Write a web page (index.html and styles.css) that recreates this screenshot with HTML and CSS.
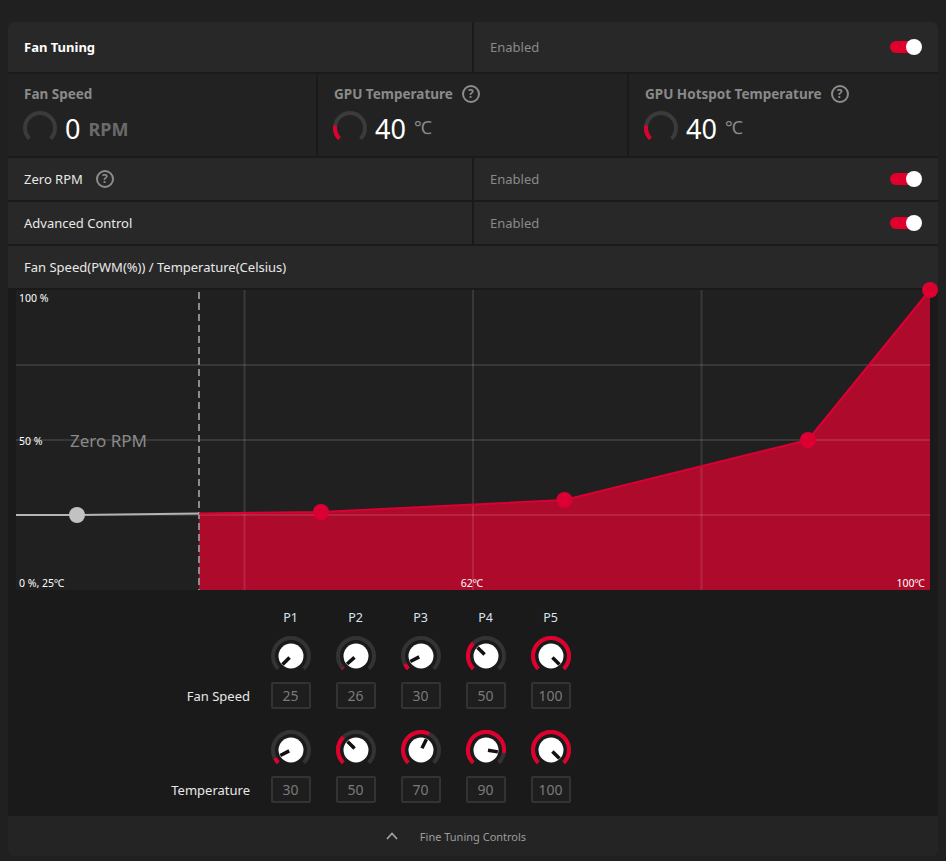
FILE: index.html
```html
<!DOCTYPE html>
<html>
<head>
<meta charset="utf-8">
<link rel="stylesheet" href="styles.css">
</head>
<body>
<div class="panel">
  <div class="row row-head">
    <div class="cell"><span class="title">Fan Tuning</span></div>
    <div class="cell cell-right"><span class="enabled">Enabled</span><span class="toggle"></span></div>
  </div>

  <div class="stats">
    <div class="stat">
      <div class="stat-title">Fan Speed</div>
      <div class="stat-value">
        <svg class="gauge" viewBox="0 0 40 40" width="40" height="40">
          <path class="g-track" d="M9.39 30.61 A15 15 0 1 1 30.61 30.61"/>
        </svg>
        <span class="num">0</span><span class="unit unit-bold">RPM</span>
      </div>
    </div>
    <div class="stat">
      <div class="stat-title">GPU Temperature <span class="help">?</span></div>
      <div class="stat-value">
        <svg class="gauge" viewBox="0 0 40 40" width="40" height="40">
          <path class="g-track" d="M9.39 30.61 A15 15 0 1 1 30.61 30.61"/>
          <path class="g-val" d="M9.39 30.61 A15 15 0 0 1 5.18 17.65"/>
        </svg>
        <span class="num">40</span><span class="unit">℃</span>
      </div>
    </div>
    <div class="stat">
      <div class="stat-title">GPU Hotspot Temperature <span class="help">?</span></div>
      <div class="stat-value">
        <svg class="gauge" viewBox="0 0 40 40" width="40" height="40">
          <path class="g-track" d="M9.39 30.61 A15 15 0 1 1 30.61 30.61"/>
          <path class="g-val" d="M9.39 30.61 A15 15 0 0 1 5.18 17.65"/>
        </svg>
        <span class="num">40</span><span class="unit">℃</span>
      </div>
    </div>
  </div>

  <div class="row">
    <div class="cell"><span class="label">Zero RPM</span><span class="help help-row">?</span></div>
    <div class="cell cell-right"><span class="enabled">Enabled</span><span class="toggle"></span></div>
  </div>

  <div class="row">
    <div class="cell"><span class="label">Advanced Control</span></div>
    <div class="cell cell-right"><span class="enabled">Enabled</span><span class="toggle"></span></div>
  </div>

  <div class="row row-full">
    <div class="cell"><span class="label">Fan Speed(PWM(%)) / Temperature(Celsius)</span></div>
  </div>

  <div class="chart-wrap">
    <svg class="chart" viewBox="0 0 914 300" width="914" height="300">
      <rect x="0" y="0" width="914" height="300" class="c-bg"/>
      <polygon class="c-fill" points="183,223.5 305,222 548.4,210 792,150 914,0 914,300 183,300"/>
      <g class="c-grid">
        <line x1="0" y1="75" x2="914" y2="75"/>
        <line x1="0" y1="150" x2="914" y2="150"/>
        <line x1="0" y1="225" x2="914" y2="225"/>
        <line x1="228.5" y1="0" x2="228.5" y2="300"/>
        <line x1="457" y1="0" x2="457" y2="300"/>
        <line x1="685.5" y1="0" x2="685.5" y2="300"/>
      </g>
      <line class="c-dash" x1="183" y1="2" x2="183" y2="300"/>
      <polyline class="c-grey" points="0,225 61,225 183,223.5"/>
      <polyline class="c-line" points="183,223.5 305,222 548.4,210 792,150 914,0"/>
      <circle class="c-gdot" cx="61" cy="225" r="8"/>
      <circle class="c-dot" cx="305" cy="222" r="8"/>
      <circle class="c-dot" cx="548.4" cy="210" r="8"/>
      <circle class="c-dot" cx="792" cy="150" r="8"/>
      <circle class="c-dot" cx="914" cy="0" r="8"/>
      <text class="c-lbl" x="3" y="12">100 %</text>
      <text class="c-lbl" x="3" y="155">50 %</text>
      <text class="c-lbl" x="3" y="297">0 %, 25℃</text>
      <text class="c-lbl" x="456" y="297" text-anchor="middle">62℃</text>
      <text class="c-lbl" x="909" y="297" text-anchor="end">100℃</text>
      <text class="c-zero" x="54" y="157">Zero RPM</text>
    </svg>
  </div>

  <div class="knobs">
    <div class="k-row k-head">
      <span></span>
      <span class="p">P1</span><span class="p">P2</span><span class="p">P3</span><span class="p">P4</span><span class="p">P5</span>
    </div>
    <div class="k-row k-dials">
      <span></span>
      <svg class="knob" viewBox="0 0 40 40" width="40" height="40"><path class="k-track" d="M7.27 32.73 A18 18 0 1 1 32.73 32.73"/><circle class="k-face" cx="20" cy="20" r="12.5"/><line class="k-ptr" x1="18.59" y1="21.41" x2="11.51" y2="28.49"/></svg>
      <svg class="knob" viewBox="0 0 40 40" width="40" height="40"><path class="k-track" d="M7.27 32.73 A18 18 0 1 1 32.73 32.73"/><path class="k-val" d="M7.27 32.73 A18 18 0 0 1 6.50 31.90"/><circle class="k-face" cx="20" cy="20" r="12.5"/><line class="k-ptr" x1="18.50" y1="21.32" x2="11.00" y2="27.94"/></svg>
      <svg class="knob" viewBox="0 0 40 40" width="40" height="40"><path class="k-track" d="M7.27 32.73 A18 18 0 1 1 32.73 32.73"/><path class="k-val" d="M7.27 32.73 A18 18 0 0 1 3.96 28.17"/><circle class="k-face" cx="20" cy="20" r="12.5"/><line class="k-ptr" x1="18.22" y1="20.91" x2="9.31" y2="25.45"/></svg>
      <svg class="knob" viewBox="0 0 40 40" width="40" height="40"><path class="k-track" d="M7.27 32.73 A18 18 0 1 1 32.73 32.73"/><path class="k-val" d="M7.27 32.73 A18 18 0 0 1 7.27 7.27"/><circle class="k-face" cx="20" cy="20" r="12.5"/><line class="k-ptr" x1="18.59" y1="18.59" x2="11.51" y2="11.51"/></svg>
      <svg class="knob" viewBox="0 0 40 40" width="40" height="40"><path class="k-track" d="M7.27 32.73 A18 18 0 1 1 32.73 32.73"/><path class="k-val" d="M7.27 32.73 A18 18 0 1 1 32.73 32.73"/><circle class="k-face" cx="20" cy="20" r="12.5"/><line class="k-ptr" x1="21.41" y1="21.41" x2="28.49" y2="28.49"/></svg>
    </div>
    <div class="k-row k-boxes">
      <span class="k-label">Fan Speed</span>
      <span class="box">25</span><span class="box">26</span><span class="box">30</span><span class="box">50</span><span class="box">100</span>
    </div>
    <div class="k-row k-dials k-dials2">
      <span></span>
      <svg class="knob" viewBox="0 0 40 40" width="40" height="40"><path class="k-track" d="M7.27 32.73 A18 18 0 1 1 32.73 32.73"/><path class="k-val" d="M7.27 32.73 A18 18 0 0 1 3.96 28.17"/><circle class="k-face" cx="20" cy="20" r="12.5"/><line class="k-ptr" x1="18.22" y1="20.91" x2="9.31" y2="25.45"/></svg>
      <svg class="knob" viewBox="0 0 40 40" width="40" height="40"><path class="k-track" d="M7.27 32.73 A18 18 0 1 1 32.73 32.73"/><path class="k-val" d="M7.27 32.73 A18 18 0 0 1 7.27 7.27"/><circle class="k-face" cx="20" cy="20" r="12.5"/><line class="k-ptr" x1="18.59" y1="18.59" x2="11.51" y2="11.51"/></svg>
      <svg class="knob" viewBox="0 0 40 40" width="40" height="40"><path class="k-track" d="M7.27 32.73 A18 18 0 1 1 32.73 32.73"/><path class="k-val" d="M7.27 32.73 A18 18 0 0 1 28.17 3.96"/><circle class="k-face" cx="20" cy="20" r="12.5"/><line class="k-ptr" x1="20.91" y1="18.22" x2="25.45" y2="9.31"/></svg>
      <svg class="knob" viewBox="0 0 40 40" width="40" height="40"><path class="k-track" d="M7.27 32.73 A18 18 0 1 1 32.73 32.73"/><path class="k-val" d="M7.27 32.73 A18 18 0 1 1 37.78 22.82"/><circle class="k-face" cx="20" cy="20" r="12.5"/><line class="k-ptr" x1="21.98" y1="20.31" x2="31.85" y2="21.88"/></svg>
      <svg class="knob" viewBox="0 0 40 40" width="40" height="40"><path class="k-track" d="M7.27 32.73 A18 18 0 1 1 32.73 32.73"/><path class="k-val" d="M7.27 32.73 A18 18 0 1 1 32.73 32.73"/><circle class="k-face" cx="20" cy="20" r="12.5"/><line class="k-ptr" x1="21.41" y1="21.41" x2="28.49" y2="28.49"/></svg>
    </div>
    <div class="k-row k-boxes">
      <span class="k-label">Temperature</span>
      <span class="box">30</span><span class="box">50</span><span class="box">70</span><span class="box">90</span><span class="box">100</span>
    </div>
  </div>

  <div class="fine">
    <svg class="chev" viewBox="0 0 12 8" width="12" height="8"><polyline points="1,7 6,1.5 11,7"/></svg>
    <span class="fine-text">Fine Tuning Controls</span>
  </div>
</div>
</body>
</html>
```

FILE: styles.css
```css
* { box-sizing: border-box; }
html, body { margin: 0; padding: 0; }
body {
  background: #202020;
  font-family: "Noto Sans", "Open Sans", sans-serif;
  color: #e6e6e6;
  width: 946px;
  height: 861px;
  overflow: hidden;
}
.panel {
  margin: 22px 0 0 8px;
  width: 930px;
  background: #1a1a1a;
  border-radius: 6px;
  display: flex;
  flex-direction: column;
  gap: 2px;
  overflow: hidden;
}
.row {
  display: grid;
  grid-template-columns: 1fr 1fr;
  gap: 2px;
  height: 42px;
}
.row-head { height: 50px; }
.row-full { grid-template-columns: 1fr; }
.cell {
  background: #282828;
  display: flex;
  align-items: center;
  padding: 0 16px;
}
.cell-right { justify-content: space-between; }
.title {
  font-weight: 700;
  font-size: 13px;
  color: #ffffff;
}
.label {
  font-size: 13px;
  color: #e8e8e8;
}
.enabled {
  font-size: 13px;
  color: #8a8a8a;
}
.toggle {
  position: relative;
  width: 30px;
  height: 12px;
  border-radius: 6px;
  background: #e1002d;
  margin-right: 2px;
}
.toggle::after {
  content: "";
  position: absolute;
  right: -2px;
  top: -2px;
  width: 16px;
  height: 16px;
  border-radius: 50%;
  background: #ffffff;
}
.help {
  display: inline-flex;
  align-items: center;
  justify-content: center;
  width: 18px;
  height: 18px;
  border: 2px solid #8c8c8c;
  border-radius: 50%;
  font-size: 12px;
  font-weight: 700;
  color: #8c8c8c;
  margin-left: 9px;
  line-height: 1;
}
.help-row { margin-left: 13px; }

.stats {
  display: grid;
  grid-template-columns: 308px 309px 309px;
  gap: 2px;
  height: 82px;
}
.stat {
  background: #222222;
  padding: 10px 16px 0 16px;
}
.stat-title {
  display: flex;
  align-items: center;
  height: 20px;
  font-size: 13.5px;
  font-weight: 700;
  color: #8a8a8a;
}
.stat-value {
  display: flex;
  align-items: center;
  margin-top: 4px;
  height: 40px;
  margin-left: -4px;
}
.gauge { display: block; }
.g-track { fill: none; stroke: #3b3b3b; stroke-width: 4; }
.g-val { fill: none; stroke: #e1002d; stroke-width: 4; }
.num {
  font-size: 27px;
  color: #ffffff;
  margin-left: 5px;
  line-height: 1;
}
.unit {
  font-size: 18px;
  color: #8a8a8a;
  margin-left: 8px;
  margin-top: -2px;
}
.unit-bold {
  font-weight: 700;
  color: #6a6a6a;
  margin-top: 2px;
}

.chart-wrap {
  padding: 0 8px;
  height: 300px;
}
.chart { display: block; overflow: visible; }
.c-bg { fill: #202020; }
.c-fill { fill: #ad0a2c; }
.c-grid line { stroke: rgba(255, 255, 255, 0.11); stroke-width: 2; }
.c-dash { stroke: #8c8c8c; stroke-width: 2; stroke-dasharray: 7 4; }
.c-grey { fill: none; stroke: #b4b4b4; stroke-width: 2; }
.c-line { fill: none; stroke: #dc0032; stroke-width: 2; }
.c-dot { fill: #dc0032; }
.c-gdot { fill: #c2c2c2; }
.c-lbl { fill: #ffffff; font-size: 10.5px; font-family: "Noto Sans", sans-serif; }
.c-zero { fill: #8a8a8a; font-size: 17px; font-family: "Noto Sans", sans-serif; }

.knobs {
  margin-top: -2px;
  padding: 16px 0 11px 0;
  background: #1a1a1a;
  display: flex;
  flex-direction: column;
}
.k-row {
  display: grid;
  grid-template-columns: 250px repeat(5, 65px);
  align-items: center;
  justify-items: center;
}
.k-head { height: 22px; }
.p { font-size: 12.5px; color: #d8e4f0; }
.k-dials { height: 40px; margin-top: 8px; }
.k-dials2 { margin-top: 21px; }
.knob { display: block; }
.k-track { fill: none; stroke: #333333; stroke-width: 4; }
.k-val { fill: none; stroke: #e1002d; stroke-width: 4; }
.k-face { fill: #ffffff; }
.k-ptr { stroke: #111111; stroke-width: 3.5; }
.k-boxes { height: 27px; margin-top: 6px; }
.k-label {
  justify-self: end;
  padding-right: 8px;
  font-size: 13px;
  color: #e8e8e8;
}
.box {
  width: 40px;
  height: 27px;
  border: 2px solid #333333;
  border-radius: 2px;
  background: #1e1e1e;
  color: #7a7a7a;
  font-size: 14px;
  display: flex;
  align-items: center;
  justify-content: center;
}

.fine {
  height: 40px;
  background: #242424;
  display: flex;
  align-items: center;
  justify-content: center;
  gap: 22px;
  padding-right: 34px;
}
.chev polyline { fill: none; stroke: #a8a8a8; stroke-width: 1.6; }
.fine-text { font-size: 11px; color: #9c9c9c; }
```
